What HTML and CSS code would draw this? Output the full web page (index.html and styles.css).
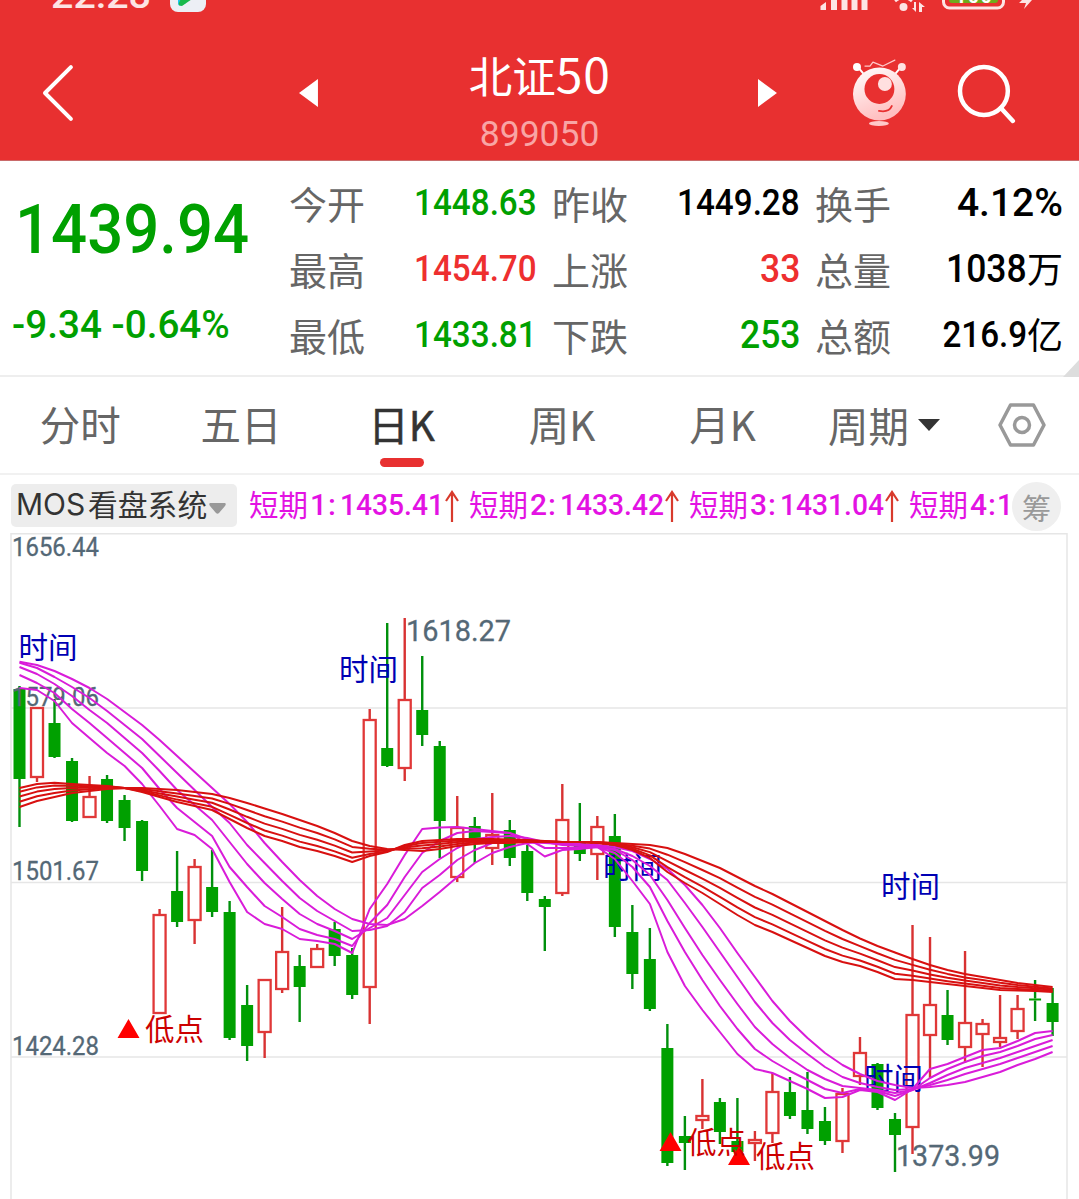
FILE: index.html
```html
<!DOCTYPE html>
<html lang="zh-CN">
<head>
<meta charset="utf-8">
<title>北证50 899050</title>
<link rel="stylesheet" href="styles.css">
</head>
<body>
<main class="app">
  <header class="header">
    <svg class="status" width="1079" height="16" viewBox="0 0 1079 16">
      <text class="status-time" x="51" y="8" textLength="100" lengthAdjust="spacingAndGlyphs">22:28</text>
      <rect x="170" y="-24" width="36" height="36" rx="8" fill="#eceff5"/>
      <path d="M178 -10V3q0 4 4 2L186 3Z" fill="#1cc4ee"/>
      <path d="M183 -6L195 -3L182 6Q179 6 178.500 4Z" fill="#19b94b"/>
      <g fill="#fde4e4">
        <path d="M820.500 10V6L826 2V10Z"/>
        <path d="M831 0h6v10h-6zM841.500 0h6v10h-6zM851.500 0h6v10h-6zM861.500 0h6v10h-6z"/>
        <circle cx="903.500" cy="7" r="4"/>
        <path d="M895 1Q903.500 -6 912 1" fill="none" stroke="#fde4e4" stroke-width="3"/>
        <path d="M916 2v10l-4-4h2V2zM919 12V2l6 5h-3v5z"/>
        <path d="M1022 0h10l-8 9 2-6h-7z"/>
      </g>
      <rect x="943.500" y="-20" width="60" height="28" rx="6" fill="none" stroke="#fde4e4" stroke-width="3"/>
      <rect x="949" y="-16" width="49" height="19" rx="3" fill="#6faa1c"/>
      <text class="battery-text" x="955" y="3" textLength="37">100</text>
    </svg>
    <nav class="nav">
      <svg class="back" width="34" height="60" viewBox="0 0 34 60"><path d="M30 4L4 30L30 56"/></svg>
      <svg class="prev" width="20" height="28" viewBox="0 0 20 28"><path d="M0 14L19 0V28Z"/></svg>
      <div class="title">
        <h1>北证<span>50</span></h1>
        <p>899050</p>
      </div>
      <svg class="next" width="20" height="28" viewBox="0 0 20 28"><path d="M19 14L0 0V28Z"/></svg>
      <svg class="mascot" width="56" height="68" viewBox="0 0 56 68">
        <defs>
          <linearGradient id="skin" x1="0" y1="0" x2=".4" y2="1">
            <stop offset="0" stop-color="#fff"/><stop offset="1" stop-color="#ffbfc0"/>
          </linearGradient>
        </defs>
        <g stroke="#fff" fill="none">
          <path d="M6 9L11 15M49 9L44 15" stroke-width="2"/>
          <path d="M13 8L18 8L21 4L31 8L43 2" stroke-width="1.200" stroke="#ffc9c9"/>
        </g>
        <circle cx="5" cy="9" r="4" fill="#fff"/><circle cx="50" cy="9" r="4" fill="#ffe2e2"/>
        <circle cx="27.500" cy="36" r="26.500" fill="url(#skin)"/>
        <circle cx="27.500" cy="31" r="15" fill="#e83030"/>
        <circle cx="33" cy="26" r="7" fill="#ffe0e0"/>
        <path d="M27 53Q37 55 40 48" fill="none" stroke="#e83030" stroke-width="1.800" stroke-linecap="round"/>
        <ellipse cx="27" cy="65.500" rx="10" ry="2.500" fill="#ffc9c9"/>
      </svg>
      <svg class="search" width="60" height="60" viewBox="0 0 60 60"><circle cx="27" cy="27" r="24"/><path d="M44 44L56 57"/></svg>
    </nav>
  </header>

  <section class="quote">
    <div class="last">
      <div class="price"><span class="num">1439.94</span></div>
      <div class="change"><span class="num">-9.34 -0.64%</span></div>
    </div>
    <dl class="stats">
      <dt>今开</dt><dd class="down"><span class="num">1448.63</span></dd>
      <dt>昨收</dt><dd><span class="num">1449.28</span></dd>
      <dt>换手</dt><dd class="large"><span class="num wide">4.12%</span></dd>
      <dt>最高</dt><dd class="up"><span class="num">1454.70</span></dd>
      <dt>上涨</dt><dd class="up large"><span class="num">33</span></dd>
      <dt>总量</dt><dd class="large"><span class="num">1038</span><span class="unit">万</span></dd>
      <dt>最低</dt><dd class="down"><span class="num">1433.81</span></dd>
      <dt>下跌</dt><dd class="down large"><span class="num">253</span></dd>
      <dt>总额</dt><dd><span class="num">216.9</span><span class="unit">亿</span></dd>
    </dl>
    <i class="corner"></i>
  </section>

  <nav class="tabs">
    <a>分时</a><a>五日</a><a class="active">日K</a><a>周K</a><a>月K</a>
    <a class="period">周期<svg width="22" height="12" viewBox="0 0 22 12"><path d="M0 0H22L11 12Z" fill="#333"/></svg></a>
    <svg class="settings" width="48" height="44" viewBox="0 0 48 44"><path d="M12.500 2H35.500L46 22L35.500 42H12.500L2 22Z"/><circle cx="24" cy="22" r="7.500"/></svg>
  </nav>

  <section class="indicator">
    <button class="chip"><span class="latin">MOS</span><span>看盘系统</span><svg width="17" height="11" viewBox="0 0 17 11"><path d="M1 0H16Q17.500 1 16 3L10 10Q8.500 11.500 7 10L1 3Q-.5 1 1 0Z" fill="#999"/></svg></button>
    <div class="values">
      <span class="value">短期<b class="n">1:</b><b class="num">1435.41</b><svg class="arrow" viewBox="0 0 14 32"><path d="M7 32V2M1 11L7 2L13 11"/></svg></span>
      <span class="value">短期<b class="n">2:</b><b class="num">1433.42</b><svg class="arrow" viewBox="0 0 14 32"><path d="M7 32V2M1 11L7 2L13 11"/></svg></span>
      <span class="value">短期<b class="n">3:</b><b class="num">1431.04</b><svg class="arrow" viewBox="0 0 14 32"><path d="M7 32V2M1 11L7 2L13 11"/></svg></span>
      <span class="value last-value">短期<b class="n">4:</b><b class="num">1</b></span>
    </div>
    <button class="chips-toggle">筹</button>
  </section>

  <svg class="chart" width="1079" height="666" viewBox="0 533 1079 666">
    <path class="grid" d="M11 1199V533.800H1067V1199M11 708H1067M11 882.500H1067M11 1057H1067"/>
    <g id="candles"></g>
    <g class="axis">
      <text x="12" y="556" textLength="87" lengthAdjust="spacingAndGlyphs">1656.44</text>
      <text x="12" y="706" textLength="87" lengthAdjust="spacingAndGlyphs">1579.06</text>
      <text x="12" y="880" textLength="87" lengthAdjust="spacingAndGlyphs">1501.67</text>
      <text x="12" y="1055" textLength="87" lengthAdjust="spacingAndGlyphs">1424.28</text>
    </g>
    <g class="extreme">
      <text x="406" y="641" textLength="105" lengthAdjust="spacingAndGlyphs">1618.27</text>
      <text x="896" y="1166" textLength="104" lengthAdjust="spacingAndGlyphs">1373.99</text>
    </g>
    <g class="time">
      <text x="18.500" y="658">时间</text>
      <text x="339" y="680">时间</text>
      <text x="603" y="878">时间</text>
      <text x="881" y="897">时间</text>
      <text x="864" y="1089">时间</text>
    </g>
    <g class="low">
      <path d="M128.500 1019L139.500 1038H117.500ZM670.500 1132L681.500 1151H659.500ZM739 1146L750 1165H728Z"/>
      <text x="145" y="1040">低点</text>
      <text x="687" y="1153">低点</text>
      <text x="756" y="1167">低点</text>
    </g>
    <g id="averages"></g>
  </svg>
</main>
<script src="chart.js"></script>
</body>
</html>
```
FILE: chart.js
```js
const SVG = 'http://www.w3.org/2000/svg';
const x = i => 19.5 + i * 17.51;

function add(parent, name, attrs) {
  const el = document.createElementNS(SVG, name);
  for (const key in attrs) el.setAttribute(key, attrs[key]);
  parent.appendChild(el);
}

// [direction, high, body top, body bottom, low]
const candles = [
  ['g',686,689,779,827],['r',708,708,777,782],['g',699,723,757,758],['g',758,761,821,822],
  ['r',776,797,817,817],['g',775,779,821,823],['g',795,800,828,841],['g',820,821,871,881],
  ['r',909,915,1013,1013],['g',851,891,922,927],['r',859,867,920,944],['g',850,887,912,917],
  ['g',901,912,1038,1040],['g',985,1005,1046,1061],['r',980,980,1032,1058],['r',907,952,989,993],
  ['g',955,966,987,1022],['r',944,949,967,967],['g',922,929,956,966],['g',948,955,995,999],
  ['r',709,720,987,1024],['g',623,748,766,767],['r',618,700,768,781],['g',656,710,735,746],
  ['g',741,746,821,858],['r',796,828,877,882],['g',817,826,838,863],['r',793,835,848,865],
  ['g',820,830,858,866],['g',845,851,893,901],['g',896,899,907,951],['r',784,820,893,896],
  ['g',803,843,854,861],['r',816,827,854,880],['g',814,836,927,937],['g',905,932,974,989],
  ['g',928,959,1009,1011],['g',1024,1048,1163,1166],['g',1116,1136,1143,1170],['r',1079,1116,1120,1129],
  ['g',1098,1102,1132,1144],['g',1098,1141,1152,1154],['r',1131,1140,1143,1161],['r',1073,1092,1133,1143],
  ['g',1077,1092,1116,1119],['g',1072,1110,1129,1134],['g',1107,1121,1141,1145],['r',1088,1094,1141,1153],
  ['r',1037,1053,1076,1085],['g',1063,1064,1108,1110],['g',1113,1119,1135,1172],['r',925,1015,1127,1154],
  ['r',937,1005,1035,1078],['g',990,1015,1040,1045],['r',951,1023,1047,1063],['r',1019,1024,1034,1067],
  ['r',995,1038,1042,1047],['r',995,1009,1031,1039],['g',980,998.5,1000.5,1021],['g',988,1003,1022,1036]
];

const candleLayer = document.getElementById('candles');
candles.forEach(([dir, high, top, bottom, low], i) => {
  const cx = x(i);
  add(candleLayer, 'path', { class: 'wick ' + dir, d: `M${cx} ${high}V${top}M${cx} ${bottom}V${low}` });
  add(candleLayer, 'rect', { class: 'body ' + dir, x: cx - 6, y: top, width: 12, height: bottom - top });
});

const shortTerm = [
  [688,690,701,723,738,753,766,784,806,829,835,849,882,912,924,929,939,941,944,953,909,884,855,829,827.5,827,829,831,833,844,856.5,850,849,847,859,881,904,952,986,1010,1032,1054,1069,1073,1081,1089,1098,1097,1090,1092,1100,1089,1069,1064,1057,1050,1048,1041,1033,1031],
  [675,683,693,709,723,738,753,768,789,808,822,836,867,887,906,917,929,935,939,946,923,905,877,853,841,833,831,832,833,839,848,848,848,847,853,867,887,921,952,980,1006,1029,1049,1061,1071,1080,1089,1093,1089,1091,1096,1090,1078,1069,1062,1056,1052,1046,1039,1035],
  [667,674,684,696,710,723,738,753,771,790,805,820,842,864,883,899,914,924,931,939,928,918,895,872,859,848,839,837,836,838,842,845,846,847,850,860,875,900,928,955,980,1004,1027,1044,1058,1070,1079,1086,1088,1090,1093,1090,1083,1075,1068,1063,1058,1052,1046,1040],
  [662.7,668,677,687,698,711,725,739,756,773,790,807,823,845,863,881,898,911,921,931,930,926,912,888,875,860,850,843,841,842,843,844,845,846,849,856,866,880,903,927,952,977,1002,1023,1040,1054,1067,1077,1083,1087,1090,1089,1085,1080,1074,1069,1064,1058,1052,1046],
  [661.7,665,671,679,688,699,712,725,740,756,772,788,804,822,843,862,880,896,909,919,924,925,919,906,892,877,863,853,847,843,842,843,844,845,847,851,859,869,885,905,928,953,977,1001,1021,1038,1053,1065,1074,1081,1085,1088,1087,1085,1082,1077,1072,1065,1059,1052]
];

const longFast = [788,784,782.7,784,785,786,788,792,797,802,806,810,819,828,836,841,847,851,856,862,856,852,845,841,840,839,839,839,839.5,840,841,842,842,843,845,850,858,872,883,893,904,915,925,932,940,948,956,962,966,972,979,980,982,984,986,988,990,990.5,991,992];
const longSlow = [807,801,797,793,791,789,788,788,789,790,792,794,798,803,808.5,814,820,826,833,841,846,849,850,851,849,846,844,843,843,842,842,842,842,842,843,844,845,848,854,861,868,877,886,894,903,912,921,930,938.5,946,952.5,959,965,970,974,977,980,983,985,987];

const longTerm = [0, 0.2, 0.45, 0.72, 1].map(t => longFast.map((y, i) => y + (longSlow[i] - y) * t));

const lineLayer = document.getElementById('averages');
const draw = (name, ys) =>
  add(lineLayer, 'polyline', { class: name, points: ys.map((y, i) => `${x(i).toFixed(1)},${y.toFixed(1)}`).join(' ') });
shortTerm.forEach(ys => draw('short', ys));
longTerm.forEach(ys => draw('long', ys));
```
FILE: styles.css
```css
* { box-sizing: border-box; margin: 0; padding: 0; }
body {
  width: 1079px;
  height: 1199px;
  overflow: hidden;
  background: #fff;
  color: #000;
  font-family: "Noto Sans CJK SC", sans-serif;
}
.app { display: flex; flex-direction: column; }
.num, .n, .title p { font-family: Roboto, sans-serif; font-weight: 500; }
.num { display: inline-block; transform: scaleX(.91); }

/* header */
.header { height: 161px; background: #e83030; border-bottom: 1px solid #c96a6a; color: #fff; }
.status { display: block; }
.status-time { font: 500 36px Roboto, sans-serif; fill: #fde4e4; }
.battery-text { font: 700 20px Roboto, sans-serif; fill: #fff; }
.nav { display: flex; height: 144px; padding: 0 62px 0 41px; }
.nav path, .nav circle { stroke-linecap: round; stroke-linejoin: round; }
.prev path, .next path { stroke: none; }
.back { margin-top: 47px; fill: none; stroke: #fff; stroke-width: 4; }
.prev, .next { margin-top: 63px; fill: #fff; }
.prev { margin-left: 224px; }
.title { width: 441px; height: 140px; padding-top: 32px; padding-left: 2px; text-align: center; }
.title h1 { font-size: 43.5px; font-weight: 400; line-height: 54px; }
.title h1 span { font-size: 48px; line-height: 1; letter-spacing: .8px; }
.title p { margin-top: 11px; font-size: 35.5px; font-weight: 400; line-height: 42px; color: #f8a5a5; }
.mascot { margin: 42px 0 0 74px; }
.search { margin: 48px 0 0 49px; fill: none; stroke: #fff; stroke-width: 4.5; }

/* quote */
.quote { position: relative; display: flex; height: 216px; border-bottom: 2px solid #eee; }
.last { width: 289px; color: #00a000; white-space: nowrap; }
.last .num { transform-origin: left; }
.price { height: 82px; margin-top: 20px; padding-left: 15px; font-size: 69px; line-height: 84px; }
.price .num { transform: scaleX(.92); }
.change { height: 50px; margin-top: 33px; padding-left: 12px; font-size: 38.5px; line-height: 50px; }
.change .num { transform: scaleX(1.005); }
.stats {
  display: grid;
  grid-template-columns: 80px 168px 95px 168px 95px 168px;
  grid-template-rows: repeat(3, 66px);
  padding-top: 10px;
  width: 774px;
}
.stats dt { font-size: 38px; line-height: 64px; color: #666; white-space: nowrap; }
.stats dt:nth-of-type(3n+2), .stats dt:nth-of-type(3n) { padding-left: 15px; }
.stats dd { display: flex; justify-content: flex-end; align-items: center; font-size: 36.5px; line-height: 62px; padding-bottom: 3px; white-space: nowrap; }
.stats dd .num { transform-origin: right; }
.stats .large { font-size: 39px; padding-bottom: 3px; }
.stats dd .wide { transform: none; }
.stats .unit { margin-bottom: 4px; font-size: 36px; }
.up { color: #ee2f2f; }
.down { color: #00a000; }
.corner { position: absolute; right: 0; bottom: -2px; width: 16px; height: 17px; background: #ddd; clip-path: polygon(100% 0, 100% 100%, 0 100%); }

/* period tabs */
.tabs { display: flex; height: 98px; border-bottom: 2px solid #f1f1f1; color: #666; font-size: 40.5px; line-height: 94px; }
.tabs a { position: relative; width: 160.600px; text-align: center; }
.tabs .active { color: #333; -webkit-text-stroke: .5px; }
.active::after { content: ""; position: absolute; left: 59px; bottom: 6px; width: 44px; height: 9px; border-radius: 5px; background: #e83030; }
.tabs .period { display: flex; align-items: center; gap: 9px; width: 172px; padding-left: 25px; }
.settings { margin: 26px 0 0 23px; fill: none; stroke: #999; stroke-width: 3.500; stroke-linejoin: round; }

/* indicator strip */
.indicator { display: flex; height: 58px; padding: 9px 18px 0 11px; }
button { border: 0; font-family: inherit; }
.chip { display: flex; flex: none; align-items: center; width: 226px; height: 43px; padding: 0 5px; border-radius: 5px; background: #ededed; color: #333; font-size: 29.8px; line-height: 39px; white-space: nowrap; }
.chip span { height: 43px; }
.chip .latin { width: 72px; font-family: Inter, sans-serif; font-size: 30px; line-height: 41px; text-align: left; }
.chip svg { flex: none; margin: 6px 0 0 2px; }
.values { display: flex; width: 776px; padding-left: 12px; color: #e312e3; font-size: 29.5px; line-height: 38px; }
.value { display: flex; flex: none; width: 220px; white-space: nowrap; }
.last-value { width: 104px; }
.value .n { width: 32px; padding-left: 2px; font-size: 30px; line-height: 41px; letter-spacing: 1px; }
.value .num { width: 104px; font-size: 30px; line-height: 41px; transform-origin: left; transform: scaleX(.94); }
.last-value .num { width: 16px; }
.arrow { width: 14px; height: 32px; margin: 6px 0 0 1px; fill: none; stroke: #d83a2c; stroke-width: 2.200; }
.chips-toggle { position: relative; flex: none; width: 49px; height: 49px; margin: -2px 0 0 -1px; border-radius: 50%; background: #efefef; color: #999; font-size: 29px; line-height: 46px; }

/* chart */
.chart { display: block; }
.grid { fill: none; stroke: #e6e6e6; stroke-width: 1.500; }
.wick { stroke-width: 2.400; }
.wick.g { stroke: #00900c; }
.wick.r { stroke: #d83232; }
.body.g { fill: #00a000; }
.body.r { fill: #fff; stroke: #e03838; stroke-width: 2.300; }
.axis, .extreme { fill: #546876; stroke: #546876; stroke-width: .3; font-family: Roboto, sans-serif; }
.axis { font-size: 25px; }
.extreme { font-size: 30px; }
.time { fill: #0000b4; font-size: 29.500px; }
.low text { fill: #cc0000; font-size: 29.500px; }
.low path { fill: #f00; }
.short, .long { fill: none; stroke-width: 2; stroke-linejoin: round; }
.short { stroke: #d91cd9; }
.long { stroke: #d81010; }
```
